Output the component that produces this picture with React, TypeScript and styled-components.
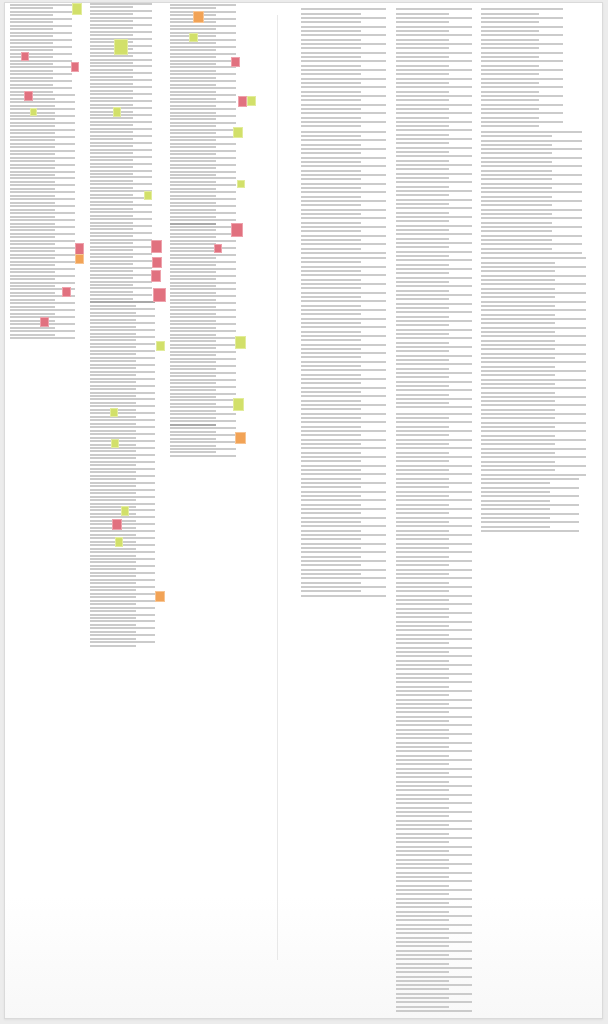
import React from "react";
import styled, { createGlobalStyle } from "styled-components";

type Tone = "lime" | "rose" | "amber";

type Seg = { n: number; long: number; short: number; gap?: number; dark?: number[] };

type Mark = { tone: Tone; x1: number; y1: number; x2: number; y2: number };

type Col = { left: number; width: number; top: number; pitch: number; segs: Seg[]; marks?: Mark[] };

const GlobalStyle = createGlobalStyle`
  html, body {
    margin: 0;
    padding: 0;
    background: #ececec;
    font-family: "Liberation Sans", Arial, sans-serif;
  }
`;

const Frame = styled.div`
  box-sizing: border-box;
  width: 608px;
  height: 1024px;
  padding: 2px 5px 0 4px;
`;

const Panel = styled.div`
  box-sizing: border-box;
  height: 1017px;
  border: 1px solid #dadada;
  background: linear-gradient(to bottom, #ffffff 88%, #f8f8f8 100%);
  box-shadow: 0 1px 2px rgba(0, 0, 0, 0.06);
  display: flex;
  overflow: hidden;
`;

const LeftPane = styled.section`
  display: flex;
  width: 272px;
  padding-left: 5px;
  box-sizing: border-box;
`;

const Divider = styled.div`
  width: 1px;
  height: 945px;
  margin-top: 12px;
  background: #e8e8e8;
`;

const RightPane = styled.section`
  display: flex;
  padding-left: 23px;
`;

const Column = styled.div<{ $w: number; $top: number }>`
  position: relative;
  width: ${(p) => p.$w}px;
  flex: none;
  padding-top: ${(p) => p.$top}px;
`;

const Para = styled.div<{ $gap: number }>`
  margin-bottom: ${(p) => p.$gap}px;
`;

const Line = styled.div<{ $w: number; $space: number; $dark?: boolean }>`
  width: ${(p) => p.$w}px;
  height: 2px;
  margin-bottom: ${(p) => p.$space}px;
  background: ${(p) => (p.$dark ? "#a9a9a9" : "#cbcbcb")};
`;

const toneFill: Record<Tone, string> = {
  lime: "#d2e06a",
  rose: "#e1717f",
  amber: "#f2a356",
};

const toneEdge: Record<Tone, string> = {
  lime: "#e2ec9c",
  rose: "#eea2ac",
  amber: "#f7c594",
};

const Marker = styled.span<{ $tone: Tone }>`
  position: absolute;
  box-sizing: border-box;
  background: ${(p) => toneFill[p.$tone]};
  border: 1px solid ${(p) => toneEdge[p.$tone]};
`;

const PANEL_TOP = 3;

const leftCols: Col[] = [
  {
    left: 10,
    width: 80,
    top: 1,
    pitch: 3.47,
    segs: [
      { n: 26, long: 62, short: 43 },
      { n: 71, long: 65, short: 45 },
    ],
    marks: [
      { tone: "lime", x1: 72, y1: 3, x2: 82, y2: 15 },
      { tone: "rose", x1: 21, y1: 52, x2: 29, y2: 61 },
      { tone: "rose", x1: 71, y1: 62, x2: 79, y2: 72 },
      { tone: "rose", x1: 24, y1: 91, x2: 33, y2: 101 },
      { tone: "lime", x1: 30, y1: 108, x2: 37, y2: 116 },
      { tone: "rose", x1: 75, y1: 243, x2: 84, y2: 255 },
      { tone: "amber", x1: 75, y1: 254, x2: 84, y2: 264 },
      { tone: "rose", x1: 62, y1: 287, x2: 71, y2: 297 },
      { tone: "rose", x1: 40, y1: 317, x2: 49, y2: 327 },
    ],
  },
  {
    left: 90,
    width: 80,
    top: 0,
    pitch: 3.47,
    segs: [
      { n: 86, long: 62, short: 43 },
      { n: 100, long: 65, short: 46, dark: [0] },
    ],
    marks: [
      { tone: "lime", x1: 114, y1: 39, x2: 128, y2: 55 },
      { tone: "lime", x1: 113, y1: 107, x2: 121, y2: 117 },
      { tone: "lime", x1: 144, y1: 191, x2: 152, y2: 200 },
      { tone: "rose", x1: 151, y1: 240, x2: 162, y2: 253 },
      { tone: "rose", x1: 152, y1: 257, x2: 162, y2: 268 },
      { tone: "rose", x1: 151, y1: 270, x2: 161, y2: 282 },
      { tone: "rose", x1: 153, y1: 288, x2: 166, y2: 302 },
      { tone: "lime", x1: 156, y1: 341, x2: 165, y2: 351 },
      { tone: "lime", x1: 110, y1: 408, x2: 118, y2: 417 },
      { tone: "lime", x1: 111, y1: 439, x2: 119, y2: 448 },
      { tone: "lime", x1: 121, y1: 506, x2: 129, y2: 516 },
      { tone: "rose", x1: 112, y1: 519, x2: 122, y2: 530 },
      { tone: "lime", x1: 115, y1: 537, x2: 123, y2: 547 },
      { tone: "amber", x1: 155, y1: 591, x2: 165, y2: 602 },
    ],
  },
  {
    left: 170,
    width: 102,
    top: 1,
    pitch: 3.47,
    segs: [{ n: 131, long: 66, short: 46, dark: [63, 121] }],
    marks: [
      { tone: "amber", x1: 193, y1: 11, x2: 204, y2: 23 },
      { tone: "lime", x1: 189, y1: 33, x2: 198, y2: 42 },
      { tone: "rose", x1: 231, y1: 57, x2: 240, y2: 67 },
      { tone: "rose", x1: 238, y1: 96, x2: 247, y2: 107 },
      { tone: "lime", x1: 247, y1: 96, x2: 256, y2: 106 },
      { tone: "lime", x1: 233, y1: 127, x2: 243, y2: 138 },
      { tone: "lime", x1: 237, y1: 180, x2: 245, y2: 188 },
      { tone: "rose", x1: 231, y1: 223, x2: 243, y2: 237 },
      { tone: "rose", x1: 214, y1: 244, x2: 222, y2: 253 },
      { tone: "lime", x1: 235, y1: 336, x2: 246, y2: 349 },
      { tone: "lime", x1: 233, y1: 398, x2: 244, y2: 411 },
      { tone: "amber", x1: 235, y1: 432, x2: 246, y2: 444 },
    ],
  },
];

const rightCols: Col[] = [
  {
    left: 301,
    width: 95,
    top: 5.3,
    pitch: 4.33,
    segs: [
      { n: 28, long: 85, short: 60, gap: 3.6 },
      { n: 29, long: 85, short: 60, gap: 3 },
      { n: 79, long: 85, short: 60 },
    ],
  },
  {
    left: 396,
    width: 85,
    top: 5.3,
    pitch: 4.33,
    segs: [
      { n: 93, long: 76, short: 53, gap: 4.3 },
      { n: 40, long: 76, short: 53, gap: 2.4 },
      { n: 99, long: 76, short: 53 },
    ],
  },
  {
    left: 481,
    width: 115,
    top: 5.3,
    pitch: 4.33,
    segs: [
      { n: 28, long: 82, short: 58, gap: 3.7 },
      { n: 29, long: 101, short: 71, gap: 3.3 },
      { n: 51, long: 105, short: 74, gap: 1.4 },
      { n: 13, long: 98, short: 69 },
    ],
  },
];

function TextColumn({ col }: { col: Col }) {
  const space = col.pitch - 2;
  return (
    <Column $w={col.width} $top={col.top}>
      {col.segs.map((seg, si) => (
        <Para key={si} $gap={seg.gap ?? 0}>
          {Array.from({ length: seg.n }, (_, i) => (
            <Line
              key={i}
              $w={i % 2 === 0 ? seg.long : seg.short}
              $space={space}
              $dark={seg.dark?.includes(i)}
            />
          ))}
        </Para>
      ))}
      {col.marks?.map((m, i) => (
        <Marker
          key={i}
          $tone={m.tone}
          style={{
            left: m.x1 - col.left,
            top: m.y1 - PANEL_TOP,
            width: m.x2 - m.x1,
            height: m.y2 - m.y1,
          }}
        />
      ))}
    </Column>
  );
}

export default function App() {
  return (
    <>
      <GlobalStyle />
      <Frame>
        <Panel>
          <LeftPane>
            {leftCols.map((c) => (
              <TextColumn key={c.left} col={c} />
            ))}
          </LeftPane>
          <Divider />
          <RightPane>
            {rightCols.map((c) => (
              <TextColumn key={c.left} col={c} />
            ))}
          </RightPane>
        </Panel>
      </Frame>
    </>
  );
}
